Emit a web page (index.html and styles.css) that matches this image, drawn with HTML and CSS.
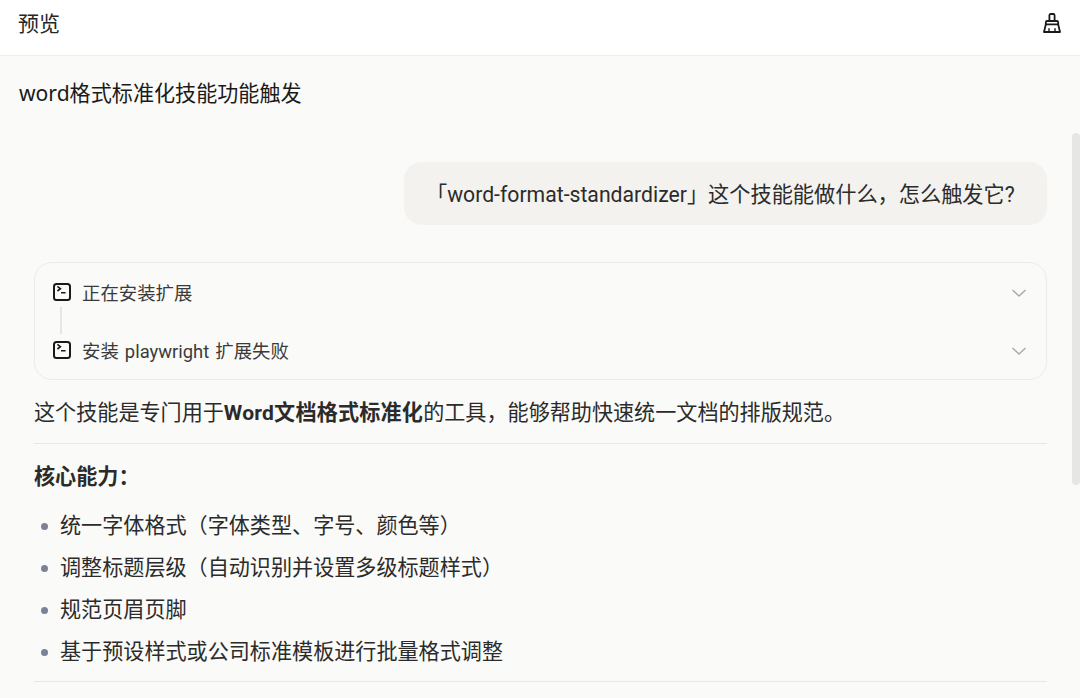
FILE: index.html
```html
<!DOCTYPE html>
<html lang="zh-CN">
<head>
  <meta charset="UTF-8" />
  <title>预览</title>
  <link rel="stylesheet" href="styles.css">
</head>
<body>
  <!-- Header -->
  <header class="top-bar">
    <span class="top-title">预览</span>
    <svg class="broom-icon" viewBox="0 0 18 20" fill="none" stroke="#1a1a1a" stroke-width="1.8" stroke-linejoin="round" stroke-linecap="round">
      <path d="M6.4 8V2.4C6.4 1.6 7 1 7.8 1h2.4c.8 0 1.4.6 1.4 1.4V8"/>
      <path d="M2.8 11.4V9.4C2.8 8.6 3.4 8 4.2 8h9.6c.8 0 1.4.6 1.4 1.4v2"/>
      <path d="M2.8 11.4h12.4L17 19H1z"/>
      <path d="M6 19v-3.4M12 19v-3.4" stroke-width="1.4"/>
    </svg>
  </header>

  <main class="content">
    <div class="scroll-thumb"></div>
    <h1 class="chat-title">word格式标准化技能功能触发</h1>

    <div class="user-row">
      <div class="user-bubble">「word-format-standardizer」这个技能能做什么，怎么触发它?</div>
    </div>

    <!-- Tool steps -->
    <section class="tool-card">
      <div class="tool-row">
        <svg class="term-icon" viewBox="0 0 18 18" fill="none" stroke="#1a1a1a">
          <rect x="1" y="1" width="16" height="16" rx="2.5" stroke-width="2"/>
          <path d="M4.4 3.4 7.4 5.7 4.4 8M8 9.8h4.6" stroke-width="1.6"/>
        </svg>
        <span class="tool-text">正在安装扩展</span>
        <svg class="chevron" viewBox="0 0 16 10" fill="none" stroke="#a9a9b2" stroke-width="1.5"><path d="M1.5 2 8 8l6.5-6"/></svg>
      </div>
      <div class="tool-line"></div>
      <div class="tool-row">
        <svg class="term-icon" viewBox="0 0 18 18" fill="none" stroke="#1a1a1a">
          <rect x="1" y="1" width="16" height="16" rx="2.5" stroke-width="2"/>
          <path d="M4.4 3.4 7.4 5.7 4.4 8M8 9.8h4.6" stroke-width="1.6"/>
        </svg>
        <span class="tool-text">安装 playwright 扩展失败</span>
        <svg class="chevron" viewBox="0 0 16 10" fill="none" stroke="#a9a9b2" stroke-width="1.5"><path d="M1.5 2 8 8l6.5-6"/></svg>
      </div>
    </section>

    <!-- Answer -->
    <article class="answer">
      <p class="intro">这个技能是专门用于<strong>Word文档格式标准化</strong>的工具，能够帮助快速统一文档的排版规范。</p>
      <hr>
      <h2 class="section-title">核心能力：</h2>
      <ul class="cap-list">
        <li>统一字体格式（字体类型、字号、颜色等）</li>
        <li>调整标题层级（自动识别并设置多级标题样式）</li>
        <li>规范页眉页脚</li>
        <li>基于预设样式或公司标准模板进行批量格式调整</li>
      </ul>
      <hr>
    </article>
  </main>
</body>
</html>
```

FILE: styles.css
```css
html, body {
  margin: 0;
  height: 100%;
  overflow: hidden;
}

body {
  font-family: Roboto, "Noto Sans CJK SC", sans-serif;
  font-size: 21.1px;
  color: #2b2b2b;
  background-color: #fafaf8;
}

.top-bar {
  height: 47px;
  display: flex;
  align-items: center;
  justify-content: space-between;
  padding: 0 19px 8px 18px;
  background-color: #ffffff;
  border-bottom: 1px solid #eeeeec;
}

.top-title {
  margin-top: -4px;
  font-size: 21px;
  color: #262626;
}

.broom-icon {
  width: 18px;
  height: 20px;
  margin-top: -2px;
}

.content {
  position: relative;
  padding: 20px 33px 0 34px;
}

.scroll-thumb {
  position: absolute;
  top: 77px;
  right: 0;
  width: 8px;
  height: 352px;
  background-color: #e6e6e4;
  border-radius: 4px;
}

.chat-title {
  margin: 0 0 0 -15px;
  font-family: "Noto Sans", "Noto Sans CJK SC", sans-serif;
  font-size: 21.1px;
  font-weight: 400;
  line-height: 34px;
  color: #1a1a1a;
}

.user-row {
  display: flex;
  justify-content: flex-end;
  margin-top: 52px;
}

.user-bubble {
  box-sizing: border-box;
  width: 643px;
  height: 63px;
  padding: 0 0 0 22px;
  font-size: 21.2px;
  line-height: 65px;
  white-space: nowrap;
  background-color: #f3f2ee;
  border-radius: 18px;
}

.tool-card {
  margin-top: 37px;
  height: 101px;
  padding: 15px 19px 0 18px;
  border: 1px solid #ebebe9;
  border-radius: 18px;
}

.tool-row {
  display: flex;
  align-items: center;
  height: 29px;
}

.term-icon {
  width: 18px;
  height: 18px;
  margin-top: -2px;
  flex-shrink: 0;
}

.tool-text {
  margin-left: 11px;
  margin-top: -2px;
  flex: 1;
  font-size: 18.4px;
  word-spacing: 1.5px;
  color: #3a3a3a;
}

.chevron {
  width: 16px;
  height: 10px;
}

.tool-line {
  width: 2px;
  height: 27px;
  margin: 0 0 2px 7px;
  background-color: #e6e6e4;
}

.answer {
  margin-top: 15px;
}

.intro {
  margin: 0;
  line-height: 36px;
}

.intro strong {
  font-weight: 700;
  letter-spacing: 0.2px;
}

hr {
  margin: 12px 0 0;
  border: none;
  border-top: 1px solid #e7e7e5;
}

.section-title {
  margin: 15px 0 0;
  font-size: 21.1px;
  font-weight: 700;
  line-height: 36px;
}

.cap-list {
  list-style: none;
  margin: 10px 0 0;
  padding: 0;
}

.cap-list li {
  position: relative;
  padding-left: 26px;
  height: 42px;
  line-height: 42px;
}

.cap-list li::before {
  content: "";
  position: absolute;
  left: 7px;
  top: 18px;
  width: 7px;
  height: 7px;
  border-radius: 50%;
  background-color: #7d8194;
}

.cap-list + hr {
  margin-top: 8px;
}
```
